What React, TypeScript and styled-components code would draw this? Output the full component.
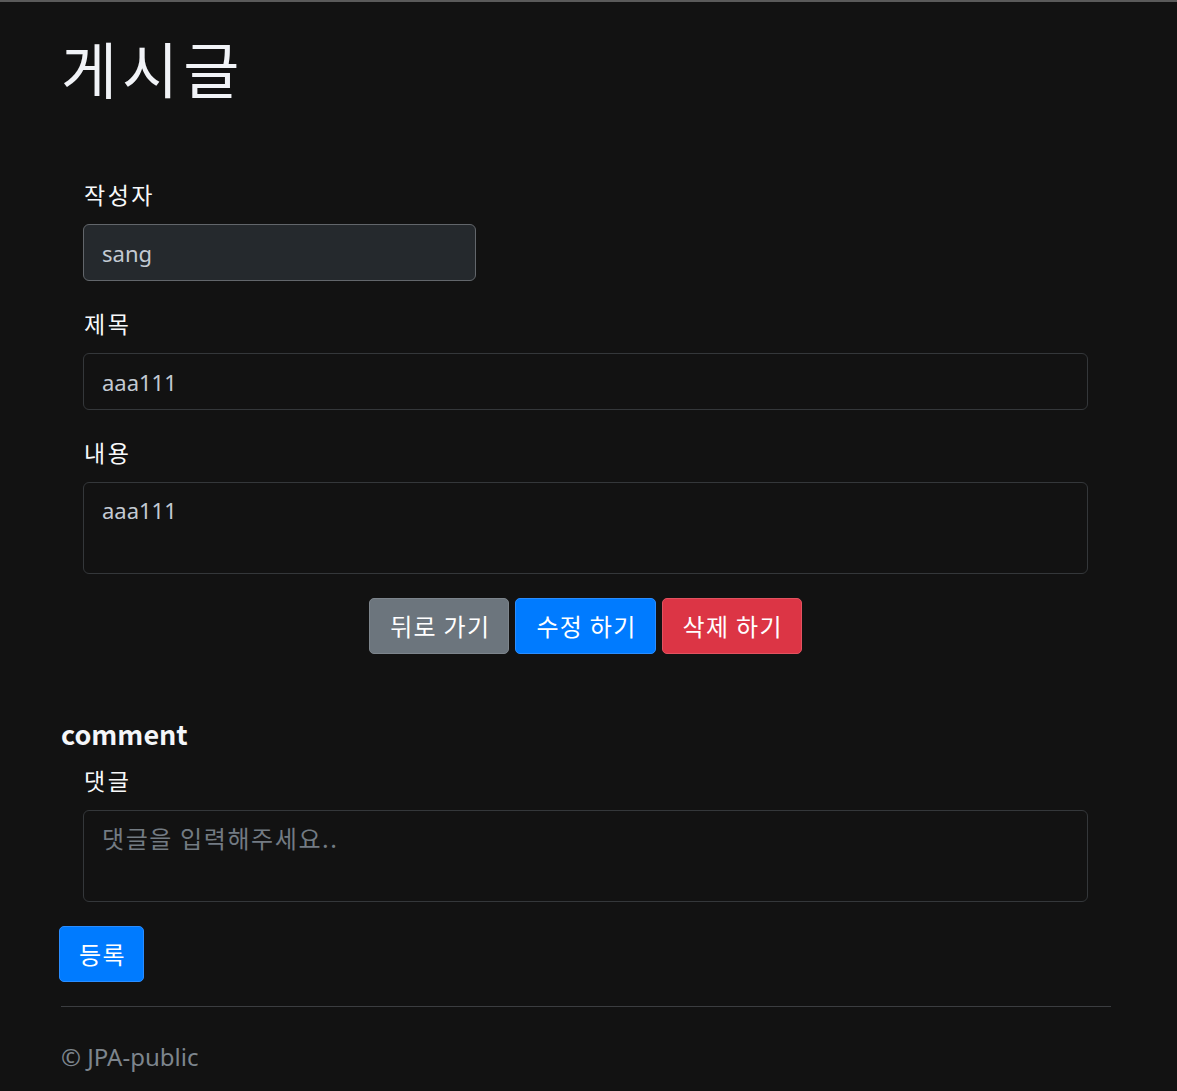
import React from "react";
import styled, { createGlobalStyle } from "styled-components";

const GlobalStyle = createGlobalStyle`
  html, body {
    margin: 0;
    padding: 0;
    background: #121212;
  }
  body {
    border-top: 2px solid #5a5a5a;
    font-family: "Segoe UI", "Noto Sans CJK KR", "Noto Sans", sans-serif;
    color: #dee2e6;
  }
  * { box-sizing: border-box; }
`;

const Container = styled.div`
  width: 1050px;
  margin-left: 61px;
`;

const Title = styled.h1`
  margin: 30px 0 72px;
  font-size: 61px;
  line-height: 72px;
  font-weight: 400;
  letter-spacing: 5px;
  color: #f1f3f7;
  font-family: "Noto Sans CJK KR", sans-serif;
`;

const Form = styled.form`
  padding: 0 23px 0 22px;
  display: flex;
  flex-direction: column;
  gap: 24px;
`;

const Field = styled.div`
  display: flex;
  flex-direction: column;
  gap: 12px;
`;

const Label = styled.label`
  font-size: 23px;
  line-height: 36px;
  letter-spacing: 2.5px;
  color: #f8f9fa;
  padding-left: 1px;
  font-family: "Noto Sans CJK KR", sans-serif;
`;

const Input = styled.input<{ $narrow?: boolean; $readonly?: boolean }>`
  width: ${(p) => (p.$narrow ? "393px" : "100%")};
  height: 57px;
  padding: 9px 18px;
  font-size: 22px;
  line-height: 36px;
  font-family: "Noto Sans", sans-serif;
  color: #c3cad3;
  background: ${(p) => (p.$readonly ? "#25292d" : "#121212")};
  border: 1px solid ${(p) => (p.$readonly ? "#62666b" : "#34373a")};
  border-radius: 6px;
  outline: none;
`;

const TextArea = styled.textarea`
  width: 100%;
  height: 92px;
  padding: 9px 18px;
  font-size: 22px;
  line-height: 36px;
  font-family: "Noto Sans", "Noto Sans CJK KR", sans-serif;
  color: #c3cad3;
  background: #121212;
  border: 1px solid #34373a;
  border-radius: 6px;
  resize: none;
  outline: none;
  &::placeholder {
    color: #737b83;
    font-size: 24px;
    letter-spacing: 1.6px;
    font-family: "Noto Sans CJK KR", sans-serif;
  }
`;

const ButtonRow = styled.div`
  display: flex;
  justify-content: center;
  gap: 6px;
`;

const variants: Record<string, { bg: string; border: string }> = {
  secondary: { bg: "#6c757d", border: "#7d858c" },
  primary: { bg: "#007bff", border: "#2a8dff" },
  danger: { bg: "#dc3545", border: "#e25260" },
};

const Button = styled.button<{ $variant: "secondary" | "primary" | "danger" }>`
  height: 56px;
  padding: 0 18px 0 20px;
  font-size: 24px;
  line-height: 36px;
  letter-spacing: 1.3px;
  font-family: "Noto Sans CJK KR", sans-serif;
  color: #ffffff;
  background: ${(p) => variants[p.$variant].bg};
  border: 1px solid ${(p) => variants[p.$variant].border};
  border-radius: 5px;
  cursor: pointer;
`;

const CommentSection = styled.section`
  margin-top: 62px;
  display: flex;
  flex-direction: column;
`;

const CommentTitle = styled.h5`
  margin: 0 0 10px;
  font-size: 27px;
  line-height: 36px;
  font-weight: 700;
  color: #f4f6f9;
`;

const CommentForm = styled.div`
  padding: 0 23px 0 22px;
`;

const RegisterButton = styled(Button)`
  align-self: flex-start;
  margin: 24px 0 0 -2px;
  padding: 0 17px 0 19px;
`;

const Divider = styled.hr`
  margin: 24px 0 0;
  border: none;
  border-top: 1px solid #3b3d40;
`;

const Footer = styled.footer`
  padding: 32px 0 20px;
  font-size: 24px;
  line-height: 36px;
  color: #7d858d;
  font-family: "Segoe UI", "Noto Sans", sans-serif;
`;

export default function App() {
  return (
    <>
      <GlobalStyle />
      <Container>
        <Title>게시글</Title>
        <Form onSubmit={(e) => e.preventDefault()}>
          <Field>
            <Label>작성자</Label>
            <Input $narrow $readonly readOnly defaultValue="sang" />
          </Field>
          <Field>
            <Label>제목</Label>
            <Input defaultValue="aaa111" />
          </Field>
          <Field>
            <Label>내용</Label>
            <TextArea defaultValue="aaa111" />
          </Field>
          <ButtonRow>
            <Button type="button" $variant="secondary">뒤로 가기</Button>
            <Button type="button" $variant="primary">수정 하기</Button>
            <Button type="button" $variant="danger">삭제 하기</Button>
          </ButtonRow>
        </Form>
        <CommentSection>
          <CommentTitle>comment</CommentTitle>
          <CommentForm>
            <Field>
              <Label>댓글</Label>
              <TextArea placeholder="댓글을 입력해주세요.." />
            </Field>
          </CommentForm>
          <RegisterButton type="button" $variant="primary">등록</RegisterButton>
        </CommentSection>
        <Divider />
        <Footer>© JPA-public</Footer>
      </Container>
    </>
  );
}
